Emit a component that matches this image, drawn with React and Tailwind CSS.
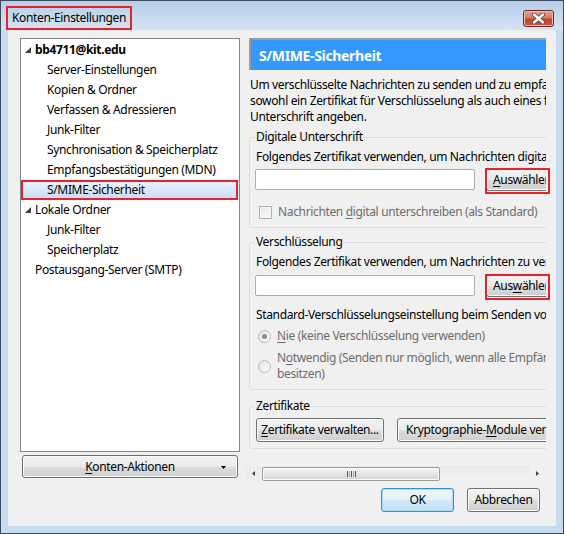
import React from "react";

const btn =
  "border border-[#707070] rounded-[3px] bg-[linear-gradient(#f2f2f2_0%,#ebebeb_50%,#dddddd_51%,#cfcfcf_100%)] shadow-[inset_0_0_0_1px_#fcfcfc] text-black";

function Tri() {
  return (
    <svg width="6" height="6" viewBox="0 0 6 6" className="shrink-0">
      <polygon points="6,0 6,6 0,6" fill="#404040" />
    </svg>
  );
}

function TreeRow({ children, pl, bold, icon }) {
  return (
    <div className={`h-[20px] flex items-center whitespace-nowrap ${pl}`}>
      {icon && <Tri />}
      <span className={`${icon ? "ml-[4px]" : ""} ${bold ? "font-bold" : ""}`}>{children}</span>
    </div>
  );
}

function Checkbox() {
  return (
    <div className="w-[13px] h-[13px] border border-[#b1b1b1] bg-[linear-gradient(135deg,#e6e6e6,#fdfdfd)] shadow-[inset_0_0_0_1px_#f4f4f4] shrink-0" />
  );
}

function Radio({ checked }) {
  return (
    <div className="w-[13px] h-[13px] rounded-full border border-[#b7b7b7] bg-[linear-gradient(135deg,#e3e3e3,#fbfbfb)] flex items-center justify-center shrink-0">
      {checked && <div className="w-[5px] h-[5px] rounded-full bg-[#8d8d8d]" />}
    </div>
  );
}

function Input() {
  return (
    <div className="w-[220px] h-[21px] -ml-[1px] bg-white border border-[#abadb3] rounded-[2px] shrink-0" />
  );
}

export default function App() {
  return (
    <div className="w-[564px] h-[534px] relative overflow-hidden border border-[#3a4a5c] bg-[#c7dbf0] flex flex-col font-['Noto_Sans',sans-serif] text-[12px] tracking-[-0.35px] text-black">
      {/* Title bar */}
      <div className="h-[29px] flex items-start bg-[linear-gradient(#b6cde7,#d5e4f3)] shrink-0">
        <div className="ml-[5px] mt-[5px] h-[24px] border-2 border-[#e8212b] px-[4px] flex items-center whitespace-nowrap text-[12px] leading-none">
          Konten-Einstellungen
        </div>
        <div className="ml-auto mr-[9px] mt-[9px] w-[31px] h-[17px] rounded-[3px] border border-[#6e2a20] bg-[linear-gradient(#e4a496_0%,#d27a68_45%,#c2432e_55%,#c8583f_100%)] shadow-[inset_0_0_0_1px_#eeb9ad] flex items-center justify-center">
          <svg width="13" height="11" viewBox="0 0 13 11">
            <path d="M2 1.5 L11 9.5 M11 1.5 L2 9.5" stroke="#4a4a4a" strokeWidth="4.2" strokeLinecap="round" />
            <path d="M2 1.5 L11 9.5 M11 1.5 L2 9.5" stroke="#ffffff" strokeWidth="2.4" strokeLinecap="round" />
          </svg>
        </div>
      </div>

      {/* Content */}
      <div className="flex-1 mx-[7px] mb-[7px] bg-[#f0f0f0] flex flex-col">
        <div className="flex items-start pt-[8px] pl-[12px]">
          {/* Left column */}
          <div className="w-[220px] flex flex-col">
            <div className="h-[414px] border border-[#828790] bg-white pt-[1px]">
              <TreeRow pl="pl-[4px]" bold icon>bb4711@kit.edu</TreeRow>
              <TreeRow pl="pl-[26px]">Server-Einstellungen</TreeRow>
              <TreeRow pl="pl-[26px]">Kopien &amp; Ordner</TreeRow>
              <TreeRow pl="pl-[26px]">Verfassen &amp; Adressieren</TreeRow>
              <TreeRow pl="pl-[26px]">Junk-Filter</TreeRow>
              <TreeRow pl="pl-[26px]">Synchronisation &amp; Speicherplatz</TreeRow>
              <TreeRow pl="pl-[26px]">Empfangsbestätigungen (MDN)</TreeRow>
              <div className="h-[20px] mr-[1px] flex items-center pl-[24px] border-2 border-[#e8212b] bg-[linear-gradient(#e9f2fd,#c8ddf7)] whitespace-nowrap">
                S/MIME-Sicherheit
              </div>
              <TreeRow pl="pl-[4px]" icon>Lokale Ordner</TreeRow>
              <TreeRow pl="pl-[26px]">Junk-Filter</TreeRow>
              <TreeRow pl="pl-[26px]">Speicherplatz</TreeRow>
              <TreeRow pl="pl-[14px]">Postausgang-Server (SMTP)</TreeRow>
            </div>
            <div className={`mt-[3px] mx-[2px] h-[23px] ${btn} relative flex items-center justify-center`}>
              <span>
                <span className="underline underline-offset-2">K</span>onten-Aktionen
              </span>
              <svg width="5" height="3" viewBox="0 0 5 3" className="absolute right-[11px] top-[10px]">
                <polygon points="0,0 5,0 2.5,3" fill="#000" />
              </svg>
            </div>
          </div>

          {/* Right column */}
          <div className="ml-[5px] w-[301px] flex flex-col">
            <div className="h-[428px] overflow-hidden pl-[4px]">
              <div className="w-[430px]">
                <div className="h-[32px] border-t-2 border-l-2 border-[#9c9c9c] bg-[#3399ff] text-white font-bold text-[14px] flex items-center pl-[8px] whitespace-nowrap">
                  S/MIME-Sicherheit
                </div>
                <div className="mt-[7px] pl-[1px] leading-[16px] whitespace-nowrap">
                  <div>Um verschlüsselte Nachrichten zu senden und zu empfangen, müssen Sie</div>
                  <div>sowohl ein Zertifikat für Verschlüsselung als auch eines für die digitale</div>
                  <div>Unterschrift angeben.</div>
                </div>

                <fieldset className="mt-[4px] border border-[#d5dfe5] rounded-[3px] px-[6px] pb-[7px]">
                  <legend className="-ml-[1px] px-[1px] leading-[16px]">Digitale Unterschrift</legend>
                  <div className="mt-[4px] leading-[16px] whitespace-nowrap">
                    Folgendes Zertifikat verwenden, um Nachrichten digital zu unterschreiben:
                  </div>
                  <div className="mt-[3px] h-[23px] flex items-center">
                    <Input />
                    <div className={`ml-[11px] w-[75px] h-[23px] ${btn} flex items-center pl-[6px] shrink-0 whitespace-nowrap`}>
                      <span>
                        <span className="underline underline-offset-2">A</span>uswählen
                      </span>
                    </div>
                  </div>
                  <div className="mt-[13px] h-[16px] flex items-center pl-[3px] text-[#6d6d6d] whitespace-nowrap">
                    <Checkbox />
                    <span className="ml-[6px]">
                      Nachrichten <span className="underline underline-offset-2">d</span>igital unterschreiben (als Standard)
                    </span>
                  </div>
                </fieldset>

                <fieldset className="mt-[6px] border border-[#d5dfe5] rounded-[3px] px-[6px] pb-[7px]">
                  <legend className="-ml-[1px] px-[1px] leading-[16px]">Verschlüsselung</legend>
                  <div className="mt-[4px] leading-[16px] whitespace-nowrap">
                    Folgendes Zertifikat verwenden, um Nachrichten zu verschlüsseln und zu entschlüsseln:
                  </div>
                  <div className="mt-[4px] h-[23px] flex items-center">
                    <Input />
                    <div className={`ml-[11px] w-[75px] h-[23px] ${btn} flex items-center pl-[6px] shrink-0 whitespace-nowrap`}>
                      <span>
                        Aus<span className="underline underline-offset-2">w</span>ählen
                      </span>
                    </div>
                  </div>
                  <div className="mt-[10px] leading-[16px] whitespace-nowrap">
                    Standard-Verschlüsselungseinstellung beim Senden von Nachrichten:
                  </div>
                  <div className="mt-[5px] h-[16px] flex items-center pl-[2px] text-[#6d6d6d] whitespace-nowrap">
                    <Radio checked />
                    <span className="ml-[6px]">
                      <span className="underline underline-offset-2">N</span>ie (keine Verschlüsselung verwenden)
                    </span>
                  </div>
                  <div className="mt-[6px] flex items-center pl-[2px] text-[#6d6d6d] whitespace-nowrap">
                    <Radio />
                    <span className="ml-[6px] leading-[16px]">
                      <div>
                        N<span className="underline underline-offset-2">o</span>twendig (Senden nur möglich, wenn alle Empfänger Zertifikate
                      </div>
                      <div>besitzen)</div>
                    </span>
                  </div>
                </fieldset>

                <fieldset className="mt-[8px] border border-[#d5dfe5] rounded-[3px] px-[6px] pb-[6px]">
                  <legend className="-ml-[1px] px-[1px] leading-[16px]">Zertifikate</legend>
                  <div className="mt-[4px] flex items-center">
                    <div className={`w-[128px] h-[24px] ${btn} flex items-center justify-center shrink-0 whitespace-nowrap`}>
                      <span>
                        <span className="underline underline-offset-2">Z</span>ertifikate verwalten...
                      </span>
                    </div>
                    <div className={`ml-[13px] h-[24px] px-[8px] ${btn} flex items-center shrink-0 whitespace-nowrap`}>
                      <span>
                        Kryptographie-<span className="underline underline-offset-2">M</span>odule verwalten...
                      </span>
                    </div>
                  </div>
                </fieldset>
              </div>
            </div>

            {/* Horizontal scrollbar */}
            <div className="h-[15px] flex items-center bg-[#f0f0f0]">
              <div className="w-[17px] h-full flex items-center justify-center bg-[#ececec]">
                <svg width="3" height="5" viewBox="0 0 3 5">
                  <polygon points="3,0 3,5 0,2.5" fill="#404040" />
                </svg>
              </div>
              <div className="flex-1 h-full flex items-center bg-[linear-gradient(#e8e8e8,#f4f4f4)]">
                <div className="w-[178px] h-[14px] rounded-[2px] border border-[#9a9a9a] bg-[linear-gradient(#f6f6f6,#e4e4e4_50%,#d5d5d5)] shadow-[inset_0_0_0_1px_#fafafa] flex items-center justify-center gap-[1px]">
                  <div className="w-[1px] h-[6px] bg-[#555]" />
                  <div className="w-[1px] h-[6px] bg-[#aaa]" />
                  <div className="w-[1px] h-[6px] bg-[#555]" />
                  <div className="w-[1px] h-[6px] bg-[#aaa]" />
                  <div className="w-[1px] h-[6px] bg-[#555]" />
                </div>
              </div>
              <div className="w-[17px] h-full flex items-center justify-center bg-[#f0f0f0]">
                <svg width="3" height="5" viewBox="0 0 3 5">
                  <polygon points="0,0 0,5 3,2.5" fill="#404040" />
                </svg>
              </div>
            </div>
          </div>
        </div>

        {/* Bottom buttons */}
        <div className="mt-[7px] flex justify-end pr-[16px] gap-[13px]">
          <div className="w-[73px] h-[24px] rounded-[3px] border border-[#3c8fc4] bg-[linear-gradient(#eef7fc_0%,#e3f1fa_50%,#d2e9f7_51%,#c5e2f4_100%)] shadow-[inset_0_0_0_1px_#a8dcf6] flex items-center justify-center">
            OK
          </div>
          <div className={`w-[73px] h-[24px] ${btn} flex items-center justify-center`}>Abbrechen</div>
        </div>
      </div>

      {/* Annotation overlays for the two "Auswählen" buttons */}
      <div className="absolute left-[484px] top-[167px] w-[65px] h-[26px] border-2 border-[#e8212b] pointer-events-none" />
      <div className="absolute left-[484px] top-[273px] w-[65px] h-[26px] border-2 border-[#e8212b] pointer-events-none" />
    </div>
  );
}
